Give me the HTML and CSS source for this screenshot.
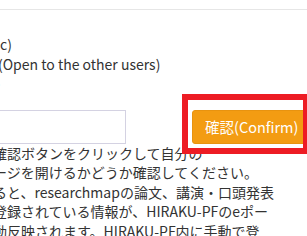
FILE: index.html
```html
<!DOCTYPE html>
<html lang="ja">
<head>
    <meta charset="UTF-8">
    <meta name="viewport" content="width=device-width, initial-scale=1.0">
    <title>HIRAKU-PF 設定</title>
    <link rel="stylesheet" href="styles.css">
</head>
<body>
    <div class="topbar"></div>

    <div class="page">
        <div class="options">
            <div class="option">c)</div>
            <div class="option">(Open to the other users)</div>
            <div class="option">)</div>
        </div>

        <div class="form-row">
            <input type="text" class="id-input">
            <div class="confirm-wrap">
                <button class="confirm-btn">確認(Confirm)</button>
                <span class="highlight"></span>
            </div>
        </div>

        <p class="note">確認ボタンをクリックして自分の<br>ージを開けるかどうか確認してください。<br>ると、researchmapの論文、講演・口頭発表<br>登録されている情報が、HIRAKU-PFのeポー<br>動反映されます。HIRAKU-PF内に手動で登</p>
    </div>
</body>
</html>
```

FILE: styles.css
```css
/* 基本 */
body {
    margin: 0;
    width: 307px;
    height: 236px;
    overflow: hidden;
    background: #fff;
    color: #333;
    font-family: "Noto Sans CJK JP", "Noto Sans", sans-serif;
    font-size: 14px;
}

.topbar {
    height: 9px;
    border-bottom: 1px solid #e6e6e6;
}

.page {
    margin-left: -7px;
}

/* 公開設定 */
.options {
    margin-top: 25px;
    line-height: 19.5px;
}

.option:nth-child(1) {
    margin-left: 7px;
}

.option:nth-child(2) {
    margin-left: 5px;
}

.option:nth-child(3) {
    margin-left: 3px;
}

/* 入力と確認ボタン */
.form-row {
    display: flex;
    align-items: center;
    width: 500px;
    margin-top: 16px;
    margin-left: -100px;
}

.id-input {
    flex: none;
    box-sizing: border-box;
    width: 233px;
    height: 34px;
    border: 1px solid #d4d2e2;
    border-radius: 0;
    padding: 6px 10px;
}

.confirm-wrap {
    flex: none;
    position: relative;
    margin-left: 66px;
}

.confirm-btn {
    display: block;
    height: 34px;
    padding: 0 12px;
    background-color: #f39c12;
    border: 1px solid #e8930f;
    border-radius: 3px;
    color: #fff;
    font-family: inherit;
    font-size: 14.5px;
    white-space: nowrap;
    cursor: pointer;
}

/* 赤枠の注釈 */
.highlight {
    position: absolute;
    left: -10px;
    top: -16px;
    width: 127px;
    height: 60px;
    box-sizing: border-box;
    border: 6px solid #ed1c24;
}

.note {
    margin: 0;
    line-height: 19.5px;
}
```
